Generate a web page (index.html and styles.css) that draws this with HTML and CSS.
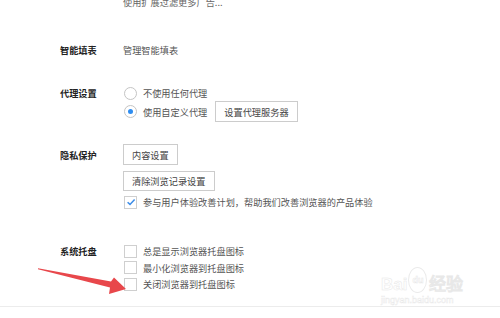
FILE: index.html
```html
<!DOCTYPE html>
<html lang="zh-CN">
<head>
  <meta charset="UTF-8">
  <title>设置</title>
  <link rel="stylesheet" href="styles.css">
</head>
<body>

<div class="page">
  <div class="section top">
    <div class="label"></div>
    <div class="body"><div class="note">使用扩展过滤更多广告...</div></div>
  </div>

  <div class="section fill">
    <div class="label">智能填表</div>
    <div class="body"><div class="line">管理智能填表</div></div>
  </div>

  <div class="section proxy">
    <div class="label">代理设置</div>
    <div class="body">
      <div class="opt first"><span class="radio"></span>不使用任何代理</div>
      <div class="opt"><span class="radio on"></span>使用自定义代理<button class="btn">设置代理服务器</button></div>
    </div>
  </div>

  <div class="section privacy">
    <div class="label">隐私保护</div>
    <div class="body">
      <button class="btn">内容设置</button>
      <button class="btn second">清除浏览记录设置</button>
      <div class="opt check-row"><span class="box on"><svg width="10" height="10" viewBox="0 0 10 10"><path d="M1.6 5.2 L4 7.4 L8.6 2.4" fill="none" stroke="#3d8de8" stroke-width="1.5"/></svg></span>参与用户体验改善计划，帮助我们改善浏览器的产品体验</div>
    </div>
  </div>

  <div class="section tray">
    <div class="label">系统托盘</div>
    <div class="body">
      <div class="opt tray-row"><span class="box"></span>总是显示浏览器托盘图标</div>
      <div class="opt tray-row"><span class="box"></span>最小化浏览器到托盘图标</div>
      <div class="opt tray-row"><span class="box"></span>关闭浏览器到托盘图标</div>
    </div>
  </div>

  <div class="footer">
    <div class="mark">
      <div class="mark-top"><span>Bai</span><span class="paw">du</span><span>经验</span></div>
      <div class="mark-url">jingyan.baidu.com</div>
    </div>
  </div>

  <svg class="arrow" width="500" height="318" viewBox="0 0 500 318">
    <polygon points="38,268.3 111,281.5 114,277.5 126,289 109,294 110,287.5 38,269.3" fill="#e8474b"/>
  </svg>
</div>

</body>
</html>
```

FILE: styles.css
```css
body {
  margin: 0;
  background: #fff;
  font-family: "Noto Sans CJK SC", "Noto Sans", sans-serif;
  font-size: 9.2px;
  color: #555;
}

.page {
  position: relative;
  height: 318px;
  overflow: hidden;
}

.section {
  display: grid;
  grid-template-columns: 63px 1fr;
  padding-left: 60px;
}

.label {
  font-weight: 700;
  color: #222;
  line-height: 16px;
}

.body {
  display: flex;
  flex-direction: column;
  align-items: flex-start;
}

.top {
  margin-top: -4px;
}

.note {
  line-height: 12px;
  color: #666;
}

.fill {
  margin-top: 35px;
}

.fill .label,
.line {
  line-height: 14px;
}

.proxy {
  margin-top: 28px;
}

.opt {
  display: flex;
  align-items: center;
  height: 21px;
  white-space: nowrap;
}

.opt.first {
  height: 16px;
}

.radio {
  width: 11px;
  height: 11px;
  border: 1px solid #c4c4c4;
  border-radius: 50%;
  margin: 0 6px 0 1px;
  position: relative;
}

.radio.on::after {
  content: "";
  position: absolute;
  left: 3px;
  top: 3px;
  width: 5px;
  height: 5px;
  border-radius: 50%;
  background: #2f8df0;
}

.btn {
  font: inherit;
  color: #444;
  background: #fff;
  border: 1px solid #ccc;
  height: 21px;
  padding: 0 8px;
  margin: 0;
}

.opt .btn {
  margin-left: 8px;
}

.privacy {
  margin-top: 22px;
}

.privacy .label {
  margin-top: 3px;
}

.btn.second {
  margin-top: 6px;
  height: 20px;
}

.check-row {
  height: 16px;
  margin-top: 3px;
}

.box {
  width: 11px;
  height: 11px;
  border: 1px solid #cfcfcf;
  margin: 0 6px 0 1px;
  display: flex;
  align-items: center;
  justify-content: center;
}

.tray {
  margin-top: 33px;
}

.tray-row {
  height: 16.5px;
}

.footer {
  position: relative;
  margin-top: 13px;
  height: 20px;
  border-top: 1px solid #ececec;
}

.mark {
  position: absolute;
  left: 381px;
  top: -42px;
  color: #fff;
  -webkit-text-stroke: 0.5px #e8e8e8;
  font-family: "Liberation Sans", sans-serif;
}

.mark-top {
  display: flex;
  align-items: flex-end;
  font-size: 17px;
  font-weight: 700;
  line-height: 20px;
  height: 30px;
}

.paw {
  font-size: 9px;
  border: 1px solid #ebebeb;
  border-radius: 50%;
  padding: 2px 3px;
  margin: 0 2px 2px 1px;
}

.mark-url {
  font-size: 9px;
  line-height: 10px;
  -webkit-text-stroke: 0.4px #e8e8e8;
}

.arrow {
  position: absolute;
  left: 0;
  top: 0;
}
```
